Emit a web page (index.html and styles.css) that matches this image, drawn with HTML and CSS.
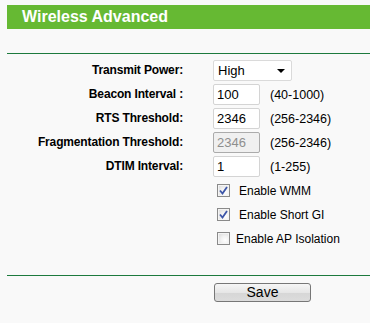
FILE: index.html
```html
<!DOCTYPE html>
<html lang="en">
<head>
    <meta charset="UTF-8" />
    <title>Wireless Advanced</title>
    <link rel="stylesheet" href="styles.css">
</head>
<body>
    <div class="page">
        <div class="title-bar">Wireless Advanced</div>
        <div class="rule top-rule"></div>

        <div class="settings">
            <label class="field-label">Transmit Power:</label>
            <div class="field">
                <div class="select-box">
                    <span>High</span>
                    <svg class="arrow" width="8" height="4" viewBox="0 0 8 4"><path d="M0 0H8L4 4Z" fill="#000"/></svg>
                </div>
            </div>

            <label class="field-label">Beacon Interval :</label>
            <div class="field">
                <input class="text-input" type="text" value="100">
                <span class="range">(40-1000)</span>
            </div>

            <label class="field-label">RTS Threshold:</label>
            <div class="field">
                <input class="text-input" type="text" value="2346">
                <span class="range">(256-2346)</span>
            </div>

            <label class="field-label">Fragmentation Threshold:</label>
            <div class="field">
                <input class="text-input" type="text" value="2346" disabled>
                <span class="range">(256-2346)</span>
            </div>

            <label class="field-label">DTIM Interval:</label>
            <div class="field">
                <input class="text-input" type="text" value="1">
                <span class="range">(1-255)</span>
            </div>

            <div></div>
            <div class="field check-row">
                <span class="check-box">
                    <svg width="9" height="9" viewBox="0 0 9 9"><path d="M1 4.5L3.5 7.5L8 1" fill="none" stroke="#3c55a8" stroke-width="1.8"/></svg>
                </span>
                <span class="check-text">Enable WMM</span>
            </div>

            <div></div>
            <div class="field check-row">
                <span class="check-box">
                    <svg width="9" height="9" viewBox="0 0 9 9"><path d="M1 4.5L3.5 7.5L8 1" fill="none" stroke="#3c55a8" stroke-width="1.8"/></svg>
                </span>
                <span class="check-text">Enable Short GI</span>
            </div>

            <div></div>
            <div class="field check-row">
                <span class="check-box"></span>
                <span class="check-text narrow">Enable AP Isolation</span>
            </div>
        </div>

        <div class="rule bottom-rule"></div>

        <div class="actions">
            <button class="save-btn">Save</button>
        </div>
    </div>
</body>
</html>
```

FILE: styles.css
```css
body {
    margin: 0;
    background-color: #f9f9f9;
    font-family: 'Liberation Sans', Arial, sans-serif;
    color: #000;
}

.page {
    padding: 5px 0 0 7px;
}

.title-bar {
    height: 24px;
    line-height: 24px;
    background-color: #66b933;
    color: #fff;
    font-size: 16px;
    font-weight: bold;
    padding-left: 15px;
}

.rule {
    height: 1px;
    background-color: #1d7a3d;
}

.top-rule {
    margin-top: 24px;
}

.settings {
    display: grid;
    grid-template-columns: 176px 1fr;
    column-gap: 30px;
    row-gap: 3px;
    margin-top: 6px;
}

.field-label {
    font-size: 12px;
    font-weight: bold;
    letter-spacing: -0.15px;
    text-align: right;
    line-height: 21px;
    height: 21px;
}

.field {
    display: flex;
    align-items: center;
    height: 21px;
}

.select-box {
    position: relative;
    box-sizing: border-box;
    width: 79px;
    height: 21px;
    background: #fff;
    border: 1px solid #dadada;
    border-radius: 2px;
    font-size: 13px;
    line-height: 19px;
    padding-left: 4px;
}

.select-box .arrow {
    position: absolute;
    right: 6px;
    top: 8px;
}

.text-input {
    box-sizing: border-box;
    width: 47px;
    height: 21px;
    margin: 0;
    padding: 0 3px;
    border: 1px solid #d4d4d4;
    border-radius: 2px;
    background: #fff;
    font-family: 'Liberation Sans', Arial, sans-serif;
    font-size: 13px;
    color: #000;
    outline: none;
}

.text-input:disabled {
    background: #f0f0f0;
    border-color: #ababab;
    color: #8e8e8e;
}

.range {
    margin-left: 10px;
    font-size: 12.5px;
}

.check-row {
    padding-left: 4px;
}

.check-box {
    box-sizing: border-box;
    width: 13px;
    height: 13px;
    border: 1px solid #8a8a8a;
    background: radial-gradient(circle at 65% 65%, #ffffff 0%, #f2f2f2 40%, #d6d6d6 100%);
    box-shadow: inset 0 0 0 1px #f4f4f4;
    display: flex;
    align-items: center;
    justify-content: center;
}

.check-text {
    margin-left: 9px;
    font-size: 12px;
}

.check-text.narrow {
    margin-left: 6px;
}

.bottom-rule {
    margin-top: 26px;
}

.actions {
    padding: 7px 0 0 207px;
}

.save-btn {
    box-sizing: border-box;
    width: 97px;
    height: 19px;
    padding: 0;
    border: 1px solid #777;
    border-radius: 3px;
    background: linear-gradient(#f6f6f6, #e6e6e6 50%, #d6d6d6 51%, #dcdcdc);
    font-family: 'Liberation Sans', Arial, sans-serif;
    font-size: 14px;
    line-height: 17px;
    color: #000;
}
```
